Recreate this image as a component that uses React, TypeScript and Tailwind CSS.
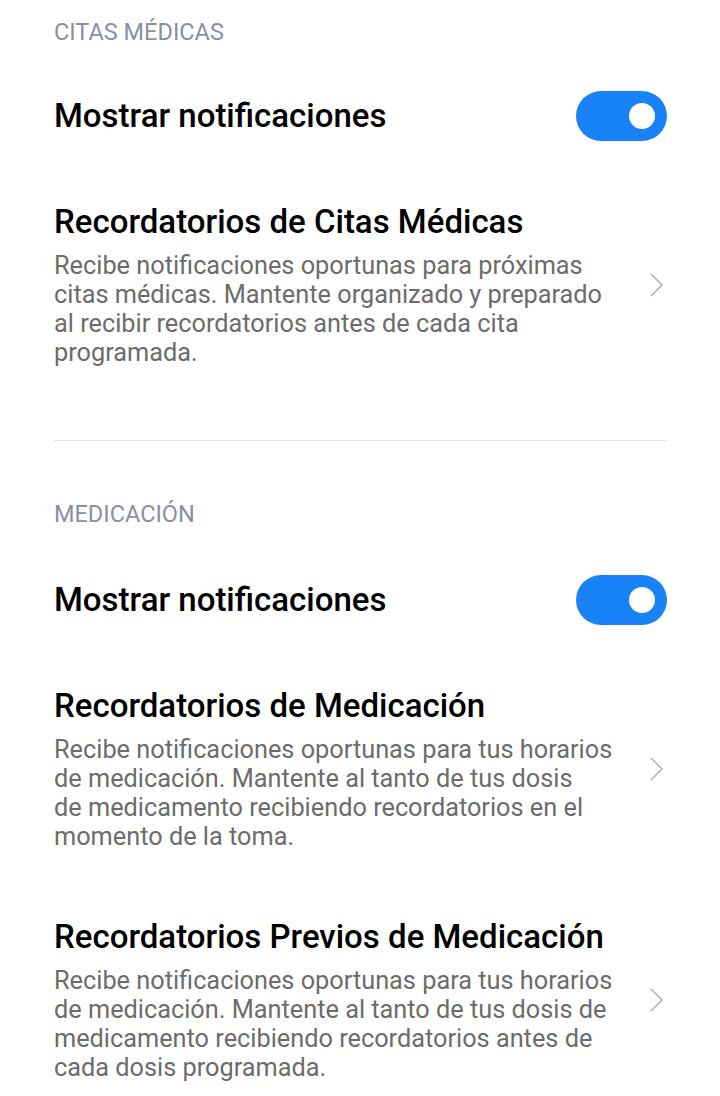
import React from "react";

const Toggle = () => (
  <div className="w-[91px] h-[50px] rounded-full bg-[#1a82f7] flex items-center justify-end pr-[12px] shrink-0">
    <div className="w-[26px] h-[26px] rounded-full bg-white" />
  </div>
);

const Chevron = () => (
  <svg width="16" height="26" viewBox="0 0 16 26" className="shrink-0">
    <path d="M2 2 L13 13 L2 24" fill="none" stroke="#b3b3b3" strokeWidth="1.6" strokeLinejoin="miter" />
  </svg>
);

const Item = ({ title, lines }: { title: string; lines: string[] }) => (
  <div className="flex items-center justify-between">
    <div className="flex flex-col">
      <div className="text-[33px] leading-[40px] font-medium text-black whitespace-nowrap">{title}</div>
      <div className="text-[25.3px] leading-[29px] text-[#6c6c6c] mt-[9px]">
        {lines.map((l, i) => (
          <div key={i} className="whitespace-nowrap">{l}</div>
        ))}
      </div>
    </div>
    <div className="pr-[2px]">
      <Chevron />
    </div>
  </div>
);

const Header = ({ text }: { text: string }) => (
  <div className="text-[23.5px] leading-[30px] text-[#8b8f9e]">{text}</div>
);

const Row = () => (
  <div className="flex items-center justify-between">
    <div className="text-[33px] leading-[40px] font-medium text-black">Mostrar notificaciones</div>
    <Toggle />
  </div>
);

export default function App() {
  return (
    <div
      className="w-[720px] h-[1096px] bg-white pl-[54px] pr-[53px] overflow-hidden"
      style={{ fontFamily: "Roboto, 'Noto Sans', sans-serif" }}
    >
      <div className="pt-[17px]">
        <Header text="CITAS MÉDICAS" />
      </div>
      <div className="mt-[44px]">
        <Row />
      </div>
      <div className="mt-[61px]">
        <Item
          title="Recordatorios de Citas Médicas"
          lines={[
            "Recibe notificaciones oportunas para próximas",
            "citas médicas. Mantente organizado y preparado",
            "al recibir recordatorios antes de cada cita",
            "programada.",
          ]}
        />
      </div>
      <div className="mt-[73px] h-px bg-[#e3e3e6]" />
      <div className="mt-[58px]">
        <Header text="MEDICACIÓN" />
      </div>
      <div className="mt-[46px]">
        <Row />
      </div>
      <div className="mt-[61px]">
        <Item
          title="Recordatorios de Medicación"
          lines={[
            "Recibe notificaciones oportunas para tus horarios",
            "de medicación. Mantente al tanto de tus dosis",
            "de medicamento recibiendo recordatorios en el",
            "momento de la toma.",
          ]}
        />
      </div>
      <div className="mt-[66px]">
        <Item
          title="Recordatorios Previos de Medicación"
          lines={[
            "Recibe notificaciones oportunas para tus horarios",
            "de medicación. Mantente al tanto de tus dosis de",
            "medicamento recibiendo recordatorios antes de",
            "cada dosis programada.",
          ]}
        />
      </div>
    </div>
  );
}
